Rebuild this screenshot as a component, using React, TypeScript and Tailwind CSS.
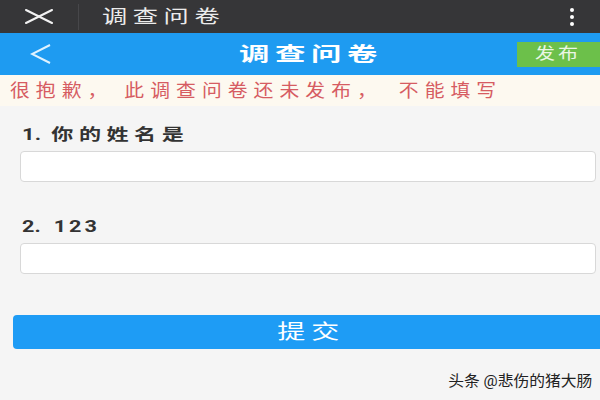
import React from 'react';

const fontStack = "font-[family-name:Roboto,'Noto_Sans_CJK_SC',sans-serif]";

const Field = () => (
  <div className="h-[31px] w-full rounded-[4px] border border-[#d8d8d8] bg-white" />
);

export default function App() {
  return (
    <div className={`w-[600px] h-[400px] overflow-hidden flex flex-col bg-[#f5f5f5] ${fontStack}`}>
      {/* system bar */}
      <div className="h-[33px] shrink-0 bg-[#363638] flex items-center">
        <div className="w-[78px] flex justify-center">
          <svg width="28" height="15" viewBox="0 0 28 15">
            <path d="M1 1 L27 14 M27 1 L1 14" stroke="#f2f2f2" strokeWidth="2" strokeLinecap="round" />
          </svg>
        </div>
        <div className="w-px h-[26px] bg-[#47474a]" />
        <span className="ml-[23px] inline-block origin-left scale-x-[1.4] text-[18px] leading-none tracking-[4px] text-[#ececec]">
          调查问卷
        </span>
        <div className="ml-auto mr-[26px] flex flex-col gap-[3px]">
          <div className="w-[4px] h-[4px] rounded-full bg-white" />
          <div className="w-[4px] h-[4px] rounded-full bg-white" />
          <div className="w-[4px] h-[4px] rounded-full bg-white" />
        </div>
      </div>

      {/* header */}
      <div className="h-[42px] shrink-0 bg-[#1e9bf1] grid grid-cols-[1fr_auto_1fr] items-center">
        <div className="pl-[30px] flex items-center">
          <svg width="22" height="20" viewBox="0 0 22 20">
            <path d="M20 1 L2 10 L20 19" fill="none" stroke="#dff2ff" strokeWidth="2" />
          </svg>
        </div>
        <span className="ml-[22px] inline-block origin-center scale-x-[1.6] text-[19px] font-bold leading-none tracking-[3.5px] text-white">
          调查问卷
        </span>
        <div className="flex justify-end">
          <button className="w-[83px] h-[25px] bg-[#6cc04a] pl-[18px] text-left text-[16px] leading-none text-[#eaf6e4]">
            <span className="inline-block origin-left scale-x-[1.25] tracking-[2.4px]">发布</span>
          </button>
        </div>
      </div>

      {/* notice */}
      <div className="h-[31px] shrink-0 bg-[#fdf9f0] flex items-center pl-[10px]">
        <span className="inline-block origin-left scale-x-[1.1] text-[18px] leading-none tracking-[5.5px] text-[#d65c62] whitespace-nowrap">
          很抱歉， 此调查问卷还未发布，　不能填写
        </span>
      </div>

      {/* form */}
      <div className="flex flex-col px-[20px] pr-[4px]">
        <div className="mt-[17px] h-[24px] leading-[24px] text-[16px] font-bold text-[#333] whitespace-nowrap pl-[2px]">
          <span className="inline-block origin-left scale-x-[1.38]">
            <span>1.</span>
            <span className="ml-[7.4px] tracking-[4px]">你的姓名是</span>
          </span>
        </div>
        <div className="mt-[4px]">
          <Field />
        </div>
        <div className="mt-[33px] h-[24px] leading-[24px] text-[16px] font-bold text-[#333] whitespace-nowrap pl-[2px]">
          <span className="inline-block origin-left scale-x-[1.35]">
            <span>2.</span>
            <span className="ml-[9.7px] tracking-[2.2px]">123</span>
          </span>
        </div>
        <div className="mt-[4px]">
          <Field />
        </div>
      </div>

      <div className="mt-[41px] pl-[13px]">
        <button className="w-full h-[34px] rounded-l-[4px] bg-[#1e9cf5] text-white text-[20px] leading-none pl-[10px]">
          <span className="inline-block origin-center scale-x-[1.4] tracking-[4.3px]">提交</span>
        </button>
      </div>

      <div className="mt-[22px] h-[20px] leading-[20px] pr-[8px] flex justify-end text-[15px] text-[#222] whitespace-nowrap">
        <span className="inline-block origin-right scale-x-[1.05]">头条 @悲伤的猪大肠</span>
      </div>
    </div>
  );
}
